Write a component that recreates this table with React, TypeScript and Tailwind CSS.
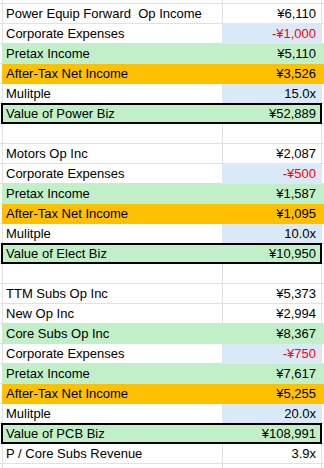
import React from 'react';

type Fill = 'green' | 'orange' | 'blue' | null;
type Kind = 'plain' | 'blue' | 'green' | 'orange' | 'value' | 'blank';

interface Row {
  label: string;
  value: string;
  kind: Kind;
  red?: boolean;
}

const rows: Row[] = [
  { label: 'Power Equip Forward  Op Income', value: '¥6,110', kind: 'plain' },
  { label: 'Corporate Expenses', value: '-¥1,000', kind: 'blue', red: true },
  { label: 'Pretax Income', value: '¥5,110', kind: 'green' },
  { label: 'After-Tax Net Income', value: '¥3,526', kind: 'orange' },
  { label: 'Mulitple', value: '15.0x', kind: 'blue' },
  { label: 'Value of Power Biz', value: '¥52,889', kind: 'value' },
  { label: '', value: '', kind: 'blank' },
  { label: 'Motors Op Inc', value: '¥2,087', kind: 'plain' },
  { label: 'Corporate Expenses', value: '-¥500', kind: 'blue', red: true },
  { label: 'Pretax Income', value: '¥1,587', kind: 'green' },
  { label: 'After-Tax Net Income', value: '¥1,095', kind: 'orange' },
  { label: 'Mulitple', value: '10.0x', kind: 'blue' },
  { label: 'Value of Elect Biz', value: '¥10,950', kind: 'value' },
  { label: '', value: '', kind: 'blank' },
  { label: 'TTM Subs Op Inc', value: '¥5,373', kind: 'plain' },
  { label: 'New Op Inc', value: '¥2,994', kind: 'plain' },
  { label: 'Core Subs Op Inc', value: '¥8,367', kind: 'green' },
  { label: 'Corporate Expenses', value: '-¥750', kind: 'blue', red: true },
  { label: 'Pretax Income', value: '¥7,617', kind: 'green' },
  { label: 'After-Tax Net Income', value: '¥5,255', kind: 'orange' },
  { label: 'Mulitple', value: '20.0x', kind: 'blue' },
  { label: 'Value of PCB Biz', value: '¥108,991', kind: 'value' },
  { label: 'P / Core Subs Revenue', value: '3.9x', kind: 'plain' },
  { label: '', value: '', kind: 'blank' },
];

// fills for [A, B, rest]
const fillsOf = (k?: Kind): [Fill, Fill, Fill] => {
  switch (k) {
    case 'blue':
      return [null, 'blue', null];
    case 'green':
      return ['green', 'green', 'green'];
    case 'orange':
      return ['orange', 'orange', 'orange'];
    case 'value':
      return ['green', 'green', null];
    default:
      return [null, null, null];
  }
};

const bg = {
  green: 'bg-[#c1f0c8]',
  orange: 'bg-[#ffc000]',
  blue: 'bg-[#dae9f8]',
  none: 'bg-white',
};
const borderB = {
  green: 'border-b-[#c1f0c8]',
  orange: 'border-b-[#ffc000]',
  blue: 'border-b-[#dae9f8]',
  none: 'border-b-[#e1e1e1]',
};
const borderR = {
  green: 'border-r-[#c1f0c8]',
  orange: 'border-r-[#ffc000]',
  blue: 'border-r-[#dae9f8]',
  none: 'border-r-[#e1e1e1]',
};

const key = (f: Fill) => f ?? 'none';

const SheetRow: React.FC<{ row: Row; next?: Row }> = ({ row, next }) => {
  const f = fillsOf(row.kind);
  const n = fillsOf(next?.kind);
  // a filled cell hides the gridlines around it
  const b = (i: number) => borderB[key(f[i] ?? n[i])];
  const r = (i: number) => borderR[key(f[i] ?? f[i + 1] ?? null)];

  if (row.kind === 'value') {
    return (
      <div className="flex h-[20px]">
        <div className="w-[1px] border-b border-b-[#e1e1e1]" />
        <div className="-mt-px flex h-[21px] w-[321px] items-end border-2 border-black bg-[#c1f0c8] pb-px">
          <div className="flex-1 whitespace-pre pl-[3px] leading-[14px]">{row.label}</div>
          <div className="pr-[4px] leading-[14px]">{row.value}</div>
        </div>
        <div className="flex-1 border-b border-b-[#e1e1e1]" />
      </div>
    );
  }

  return (
    <div className="flex h-[20px]">
      <div className={`w-[3px] border-b border-r border-b-[#e1e1e1] ${borderR[key(f[0])]}`} />
      <div className={`flex w-[220px] items-end whitespace-pre border-b border-r pb-[2px] pl-[3px] leading-[14px] ${bg[key(f[0])]} ${b(0)} ${r(0)}`}>
        {row.label}
      </div>
      <div
        className={`flex w-[99px] items-end justify-end border-b border-r pb-[2px] pr-[5px] leading-[14px] ${bg[key(f[1])]} ${b(1)} ${r(1)} ${row.red ? 'text-[#ff0000]' : ''}`}
      >
        {row.value}
      </div>
      <div className={`flex-1 border-b ${bg[key(f[2])]} ${b(2)}`} />
    </div>
  );
};

const App: React.FC = () => {
  return (
    <div className="h-[468px] w-[324px] overflow-hidden bg-white font-['Liberation_Sans',Arial,sans-serif] text-[13px] text-black">
      {/* partial row above */}
      <div className="flex h-[4px]">
        <div className="w-[3px] border-b border-r border-b-[#e1e1e1] border-r-[#e1e1e1]" />
        <div className="w-[220px] border-b border-r border-b-[#e1e1e1] border-r-[#e1e1e1]" />
        <div className="w-[99px] border-b border-r border-b-[#e1e1e1] border-r-[#e1e1e1]" />
        <div className="flex-1 border-b border-b-[#e1e1e1]" />
      </div>
      {rows.map((row, i) => (
        <SheetRow key={i} row={row} next={rows[i + 1]} />
      ))}
    </div>
  );
};

export default App;
